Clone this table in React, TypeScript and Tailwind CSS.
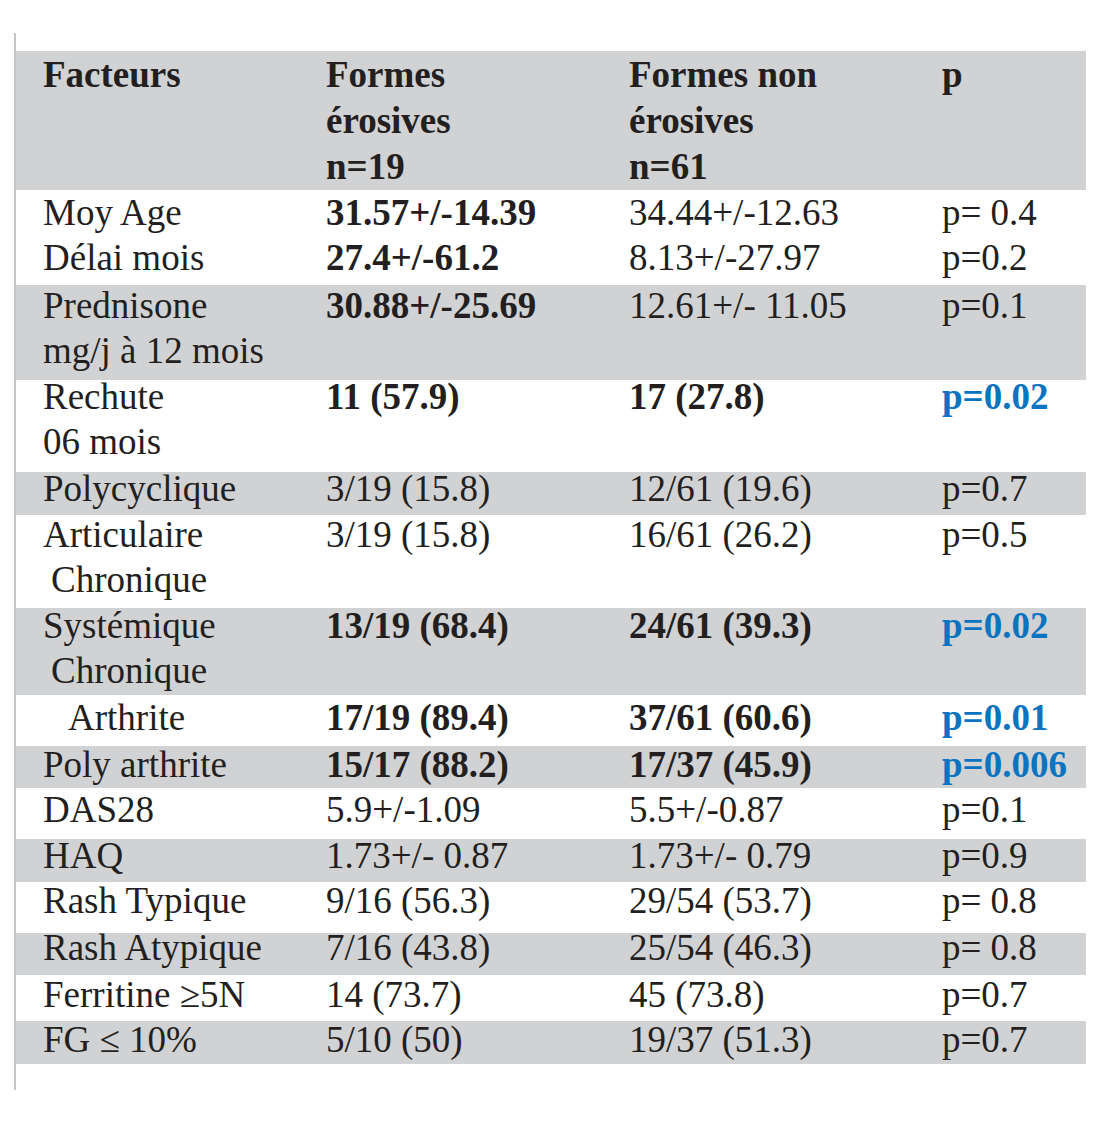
import React from "react";

type Seg = { t: string; b?: boolean; blue?: boolean; indent?: string };
type Row = {
  h: string;
  mt: string;
  gray: boolean;
  cells: Seg[][];
  header?: boolean;
};

const rows: Row[] = [
  {
    h: "h-[139px]",
    mt: "mt-[1px]",
    gray: true,
    header: true,
    cells: [
      [{ t: "Facteurs", b: true }],
      [
        { t: "Formes", b: true },
        { t: "érosives", b: true },
        { t: "n=19", b: true },
      ],
      [
        { t: "Formes non", b: true },
        { t: "érosives", b: true },
        { t: "n=61", b: true },
      ],
      [{ t: "p", b: true }],
    ],
  },
  {
    h: "h-[47px]",
    mt: "mt-[0px]",
    gray: false,
    cells: [
      [{ t: "Moy Age" }],
      [{ t: "31.57+/-14.39", b: true }],
      [{ t: "34.44+/-12.63" }],
      [{ t: "p= 0.4" }],
    ],
  },
  {
    h: "h-[48px]",
    mt: "-mt-[2px]",
    gray: false,
    cells: [
      [{ t: "Délai mois" }],
      [{ t: "27.4+/-61.2", b: true }],
      [{ t: "8.13+/-27.97" }],
      [{ t: "p=0.2" }],
    ],
  },
  {
    h: "h-[95px]",
    mt: "-mt-[2px]",
    gray: true,
    cells: [
      [{ t: "Prednisone" }, { t: "mg/j à 12 mois" }],
      [{ t: "30.88+/-25.69", b: true }],
      [{ t: "12.61+/- 11.05" }],
      [{ t: "p=0.1" }],
    ],
  },
  {
    h: "h-[92px]",
    mt: "-mt-[6px]",
    gray: false,
    cells: [
      [{ t: "Rechute" }, { t: "06 mois" }],
      [{ t: "11 (57.9)", b: true }],
      [{ t: "17 (27.8)", b: true }],
      [{ t: "p=0.02", b: true, blue: true }],
    ],
  },
  {
    h: "h-[43px]",
    mt: "-mt-[6px]",
    gray: true,
    cells: [
      [{ t: "Polycyclique" }],
      [{ t: "3/19 (15.8)" }],
      [{ t: "12/61 (19.6)" }],
      [{ t: "p=0.7" }],
    ],
  },
  {
    h: "h-[93px]",
    mt: "-mt-[3px]",
    gray: false,
    cells: [
      [{ t: "Articulaire" }, { t: "Chronique", indent: "pl-[8px]" }],
      [{ t: "3/19 (15.8)" }],
      [{ t: "16/61 (26.2)" }],
      [{ t: "p=0.5" }],
    ],
  },
  {
    h: "h-[87px]",
    mt: "-mt-[5px]",
    gray: true,
    cells: [
      [{ t: "Systémique" }, { t: "Chronique", indent: "pl-[8px]" }],
      [{ t: "13/19 (68.4)", b: true }],
      [{ t: "24/61 (39.3)", b: true }],
      [{ t: "p=0.02", b: true, blue: true }],
    ],
  },
  {
    h: "h-[51px]",
    mt: "mt-[0px]",
    gray: false,
    cells: [
      [{ t: "Arthrite", indent: "pl-[25px]" }],
      [{ t: "17/19 (89.4)", b: true }],
      [{ t: "37/61 (60.6)", b: true }],
      [{ t: "p=0.01", b: true, blue: true }],
    ],
  },
  {
    h: "h-[42px]",
    mt: "-mt-[4px]",
    gray: true,
    cells: [
      [{ t: "Poly arthrite" }],
      [{ t: "15/17 (88.2)", b: true }],
      [{ t: "17/37 (45.9)", b: true }],
      [{ t: "p=0.006", b: true, blue: true }],
    ],
  },
  {
    h: "h-[51px]",
    mt: "-mt-[1px]",
    gray: false,
    cells: [
      [{ t: "DAS28" }],
      [{ t: "5.9+/-1.09" }],
      [{ t: "5.5+/-0.87" }],
      [{ t: "p=0.1" }],
    ],
  },
  {
    h: "h-[43px]",
    mt: "-mt-[6px]",
    gray: true,
    cells: [
      [{ t: "HAQ" }],
      [{ t: "1.73+/- 0.87" }],
      [{ t: "1.73+/- 0.79" }],
      [{ t: "p=0.9" }],
    ],
  },
  {
    h: "h-[51px]",
    mt: "-mt-[4px]",
    gray: false,
    cells: [
      [{ t: "Rash Typique" }],
      [{ t: "9/16 (56.3)" }],
      [{ t: "29/54 (53.7)" }],
      [{ t: "p= 0.8" }],
    ],
  },
  {
    h: "h-[42px]",
    mt: "-mt-[8px]",
    gray: true,
    cells: [
      [{ t: "Rash Atypique" }],
      [{ t: "7/16 (43.8)" }],
      [{ t: "25/54 (46.3)" }],
      [{ t: "p= 0.8" }],
    ],
  },
  {
    h: "h-[46px]",
    mt: "-mt-[3px]",
    gray: false,
    cells: [
      [{ t: "Ferritine ≥5N" }],
      [{ t: "14 (73.7)" }],
      [{ t: "45 (73.8)" }],
      [{ t: "p=0.7" }],
    ],
  },
  {
    h: "h-[43px]",
    mt: "-mt-[4px]",
    gray: true,
    cells: [
      [{ t: "FG ≤ 10%" }],
      [{ t: "5/10 (50)" }],
      [{ t: "19/37 (51.3)" }],
      [{ t: "p=0.7" }],
    ],
  },
];

function Line({ s, header }: { s: Seg; header?: boolean }) {
  return (
    <div
      className={[
        "whitespace-pre",
        header ? "leading-[46px]" : "leading-[45px]",
        s.b ? "font-bold" : "font-normal",
        s.blue ? "text-[#0b74c0]" : "text-[#231f20]",
        s.indent ?? "",
      ].join(" ")}
    >
      {s.t}
    </div>
  );
}

export default function App() {
  return (
    <div className="min-h-[1125px] w-[1101px] bg-white">
      <div
        className="ml-[14px] mt-[33px] w-[1072px] border-l-2 border-[#c6c6c6] pb-[26px] pt-[18px] text-[37px]"
        style={{ fontFamily: '"Liberation Serif", "Times New Roman", serif' }}
      >
        {rows.map((r, i) => (
          <div
            key={i}
            className={[
              "grid grid-cols-[283px_303px_313px_1fr] overflow-visible pl-[27px]",
              r.h,
              r.gray ? "bg-[#d1d2d4]" : "bg-white",
            ].join(" ")}
          >
            {r.cells.map((c, j) => (
              <div key={j} className={r.mt}>
                {c.map((s, k) => (
                  <Line key={k} s={s} header={r.header} />
                ))}
              </div>
            ))}
          </div>
        ))}
      </div>
    </div>
  );
}
